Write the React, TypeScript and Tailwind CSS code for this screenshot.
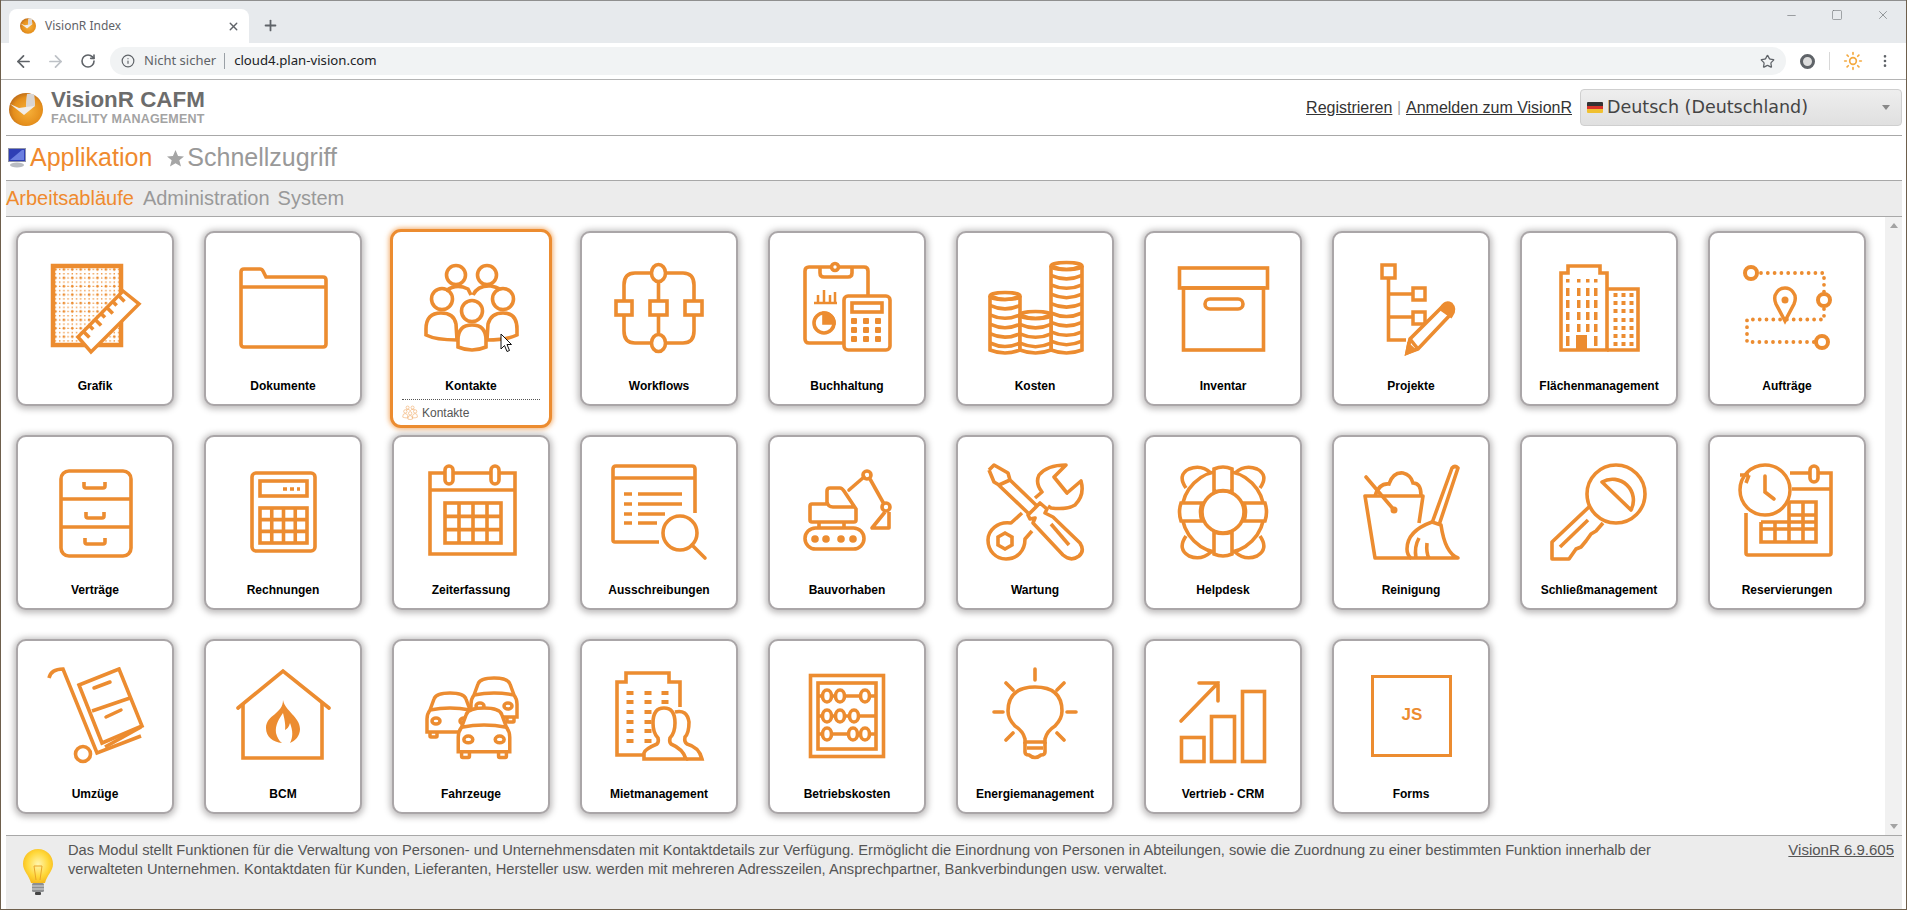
import React from "react";
import { ArrowLeft, ArrowRight, RotateCw, Info, Star, EllipsisVertical, Plus, X, Minus, Square, Sun } from "lucide-react";

const OG = "#ec8c30";

const CellGrid = ({ x, y, w, h, cols, rows }: { x: number; y: number; w: number; h: number; cols: number; rows: number }) => (
  <g>
    <rect x={x} y={y} width={w} height={h} />
    {Array.from({ length: cols - 1 }).map((_, i) => (
      <line key={i} x1={x + ((i + 1) * w) / cols} x2={x + ((i + 1) * w) / cols} y1={y} y2={y + h} />
    ))}
    {Array.from({ length: rows - 1 }).map((_, i) => (
      <line key={i} y1={y + ((i + 1) * h) / rows} y2={y + ((i + 1) * h) / rows} x1={x} x2={x + w} />
    ))}
  </g>
);

const CoinStack = ({ x, w, top, bottom }: { x: number; w: number; top: number; bottom: number }) => {
  const cx = x + w / 2;
  const rx = w / 2;
  const arcs: number[] = [];
  for (let y = top + 3; y < bottom - 4; y += 9.4) arcs.push(y);
  return (
    <g>
      <path d={`M${x} ${top + 3} V${bottom - 3} Q${cx} ${bottom + 3} ${x + w} ${bottom - 3} V${top + 3}`} fill="#fff" />
      <ellipse cx={cx} cy={top + 3} rx={rx} ry={3.5} />
      {arcs.map((y) => (
        <path key={y} d={`M${x} ${y} Q${cx} ${y + 7} ${x + w} ${y}`} />
      ))}
    </g>
  );
};

const Car = ({ x, y, s }: { x: number; y: number; s: number }) => (
  <g transform={`translate(${x} ${y}) scale(${s})`} strokeWidth={3.5 / s}>
    <rect x="5" y="39" width="7" height="6" rx="1" fill="#fff" />
    <rect x="38" y="39" width="7" height="6" rx="1" fill="#fff" />
    <path d="M2 40 V27 Q2 22 5 18 L9 7 Q11 1 25 1 Q39 1 41 7 L45 18 Q48 22 48 27 V40 Z" fill="#fff" />
    <path d="M5 18 Q25 14 45 18" />
    <ellipse cx="11" cy="29" rx="4" ry="3" />
    <ellipse cx="39" cy="29" rx="4" ry="3" />
  </g>
);

const icons: Record<string, React.ReactNode> = {
  Grafik: (
    <>
      <defs>
        <pattern id="grafik-dots" width="8.4" height="8.4" patternUnits="userSpaceOnUse">
          <circle cx="2.1" cy="2.1" r="1.3" fill={OG} stroke="none" />
          <circle cx="6.3" cy="2.1" r="0.8" fill={OG} stroke="none" />
          <circle cx="2.1" cy="6.3" r="0.8" fill={OG} stroke="none" />
          <circle cx="6.3" cy="6.3" r="0.8" fill={OG} stroke="none" />
        </pattern>
      </defs>
      <rect x="8" y="7" width="68" height="79" strokeWidth="4.5" fill="url(#grafik-dots)" />
      <polygon points="33,78 78,32 94,45 46,93" fill="#fff" strokeWidth="3.5" />
      {[0.12, 0.25, 0.38, 0.51, 0.64, 0.77, 0.9].map((t, i) => (
        <line key={t} x1={33 + t * 45} y1={78 - t * 46} x2={33 + t * 45 + (i % 2 ? 4 : 6)} y2={78 - t * 46 + (i % 2 ? 4 : 6)} />
      ))}
    </>
  ),
  Dokumente: (
    <>
      <path d="M8 13 Q8 10 11 10 H27 Q29 10 30 12 L33 18 H90 Q93 18 93 21 V85 Q93 88 90 88 H11 Q8 88 8 85 Z" />
      <path d="M8 28 H93" />
    </>
  ),
  Kontakte: (
    <>
      <circle cx="35" cy="16" r="9.5" />
      <circle cx="66" cy="16" r="9.5" />
      <path d="M25 32 Q35 24 47 30 L50 36" />
      <path d="M52 36 Q57 26 70 27 Q75 28 79 30" />
      <circle cx="21" cy="40" r="10.5" />
      <circle cx="82" cy="40" r="10.5" />
      <circle cx="51" cy="52" r="10.5" />
      <path d="M5 76 V70 Q5 54 20 54 Q33 54 35 65 L36 81 Q15 81 5 76 Z" />
      <path d="M96 76 V70 Q96 54 82 54 Q70 54 67 65 L66 81 Q86 81 96 76 Z" />
      <path d="M37 88 V81 Q37 66 51 66 Q65 66 65 81 V88 Q51 94 37 88 Z" />
    </>
  ),
  Workflows: (
    <>
      <path d="M42 14 H26 Q15 14 15 26 V42 M15 56 V72 Q15 84 26 84 H42 M57 84 H74 Q85 84 85 72 V56 M85 42 V26 Q85 14 74 14 H57" />
      <path d="M49.5 24 V41 M49.5 57 V74" />
      <ellipse cx="49.5" cy="14" rx="7" ry="8.5" />
      <ellipse cx="49.5" cy="84" rx="7" ry="8.5" />
      <rect x="7" y="42" width="16" height="14" />
      <rect x="41" y="42" width="17" height="14" />
      <rect x="76" y="42" width="17" height="14" />
    </>
  ),
  Buchhaltung: (
    <>
      <path d="M46 84 H12 Q8 84 8 80 V12 Q8 8 12 8 H67 Q71 8 71 12 V36" />
      <path d="M23 8 V14 Q23 18 27 18 H51 Q55 18 55 14 V8" />
      <circle cx="38" cy="8" r="3.5" fill="#fff" />
      <path d="M17 44 H40 M21 44 V36 M27 44 V31 M33 44 V36 M38 44 V33" strokeWidth="2.5" />
      <circle cx="27" cy="64" r="10" />
      <path d="M27 54 V64 H37 A10 10 0 0 0 27 54 Z" fill={OG} />
      <rect x="47" y="37" width="46" height="54" rx="4" />
      <rect x="55" y="44" width="30" height="9" />
      {[62, 71, 80].map((y) => [57, 69, 81].map((x) => <rect key={`${x}-${y}`} x={x - 3} y={y - 3} width="6" height="6" fill={OG} stroke="none" rx="1" />))}
    </>
  ),
  Kosten: (
    <>
      <CoinStack x={66} w={31} top={4} bottom={94} />
      <CoinStack x={5} w={30} top={34} bottom={94} />
      <CoinStack x={35} w={31} top={53} bottom={94} />
    </>
  ),
  Inventar: (
    <>
      <rect x="6.5" y="9" width="88" height="20" />
      <rect x="10.5" y="29" width="80" height="62" />
      <rect x="32" y="40" width="38" height="10" rx="5" />
    </>
  ),
  Projekte: (
    <>
      <rect x="21" y="6" width="13" height="13" strokeWidth="3.5" />
      <path d="M27.5 19 V81 H45 M27.5 35 H51 M27.5 58 H51" />
      <rect x="52" y="29" width="12" height="12" strokeWidth="3.5" />
      <rect x="52" y="53" width="12" height="12" strokeWidth="3.5" />
      <path d="M46 94 L49 80 L82 47 Q86 43 90 47 Q94 51 90 55 L57 90 Z" fill="#fff" />
      <path d="M80 50 Q84 42 90 45 Q95 50 90 57 Z" fill={OG} />
      <path d="M46 94 L47.5 86 L53 91 Z" fill={OG} />
      <path d="M49 80 L57 90" />
    </>
  ),
  Flächenmanagement: (
    <>
      <path d="M12 91 V14 H19 V7 H51 V14 H58 V91 Z" />
      <path d="M59 30 H89 V91 H58" />
      {[18, 29, 38, 46].map((x) => (
        <g key={x} fill={OG} stroke="none">
          <rect x={x - 1} y="20" width="3.5" height="3.5" />
          {[29, 41, 53, 65].map((y) => (
            <rect key={y} x={x - 1} y={y} width="3.5" height="8" />
          ))}
          {x !== 29 && x !== 38 && <rect x={x - 1} y="77" width="3.5" height="10" />}
        </g>
      ))}
      <rect x="27" y="76" width="11" height="15" fill={OG} stroke="none" />
      {[36, 44, 52, 61, 69, 77, 85].map((y) =>
        [66, 74, 82].map((x) => <rect key={`${x}-${y}`} x={x - 1.5} y={y - 2} width="4" height="4" fill={OG} stroke="none" />)
      )}
    </>
  ),
  Aufträge: (
    <>
      <circle cx="14" cy="14" r="6" strokeWidth="4" />
      <circle cx="87" cy="41" r="6" strokeWidth="4" />
      <circle cx="85" cy="83" r="6" strokeWidth="4" />
      <path d="M24 14 H87 V33 M87 50 V60.5 H10 V83 H77" strokeWidth="3.8" strokeDasharray="0 6.8" strokeLinecap="round" />
      <path d="M48 62 L39 45 Q36 38 40 33 Q43 29 48 29 Q53 29 56 33 Q60 38 57 45 Z" fill="#fff" strokeWidth="3.5" />
      <circle cx="48" cy="41" r="3.5" fill={OG} stroke="none" />
    </>
  ),
  Verträge: (
    <>
      <rect x="16" y="8" width="70" height="85" rx="8" />
      <path d="M16 36 H86 M16 64 H86" />
      <path d="M39 19 V23 Q39 25 41 25 H58 Q60 25 60 23 V19" />
      <path d="M41 49 V53 Q41 55 43 55 H57 Q59 55 59 53 V49" />
      <path d="M40 75 V79 Q40 81 42 81 H58 Q60 81 60 79 V75" />
    </>
  ),
  Rechnungen: (
    <>
      <rect x="19" y="10" width="63" height="78" rx="4" />
      <rect x="27" y="18" width="47" height="15" />
      <path d="M50 26 H67" strokeDasharray="4 3" strokeWidth="3.5" />
      <CellGrid x={27} y={45} w={47} h={35} cols={4} rows={3} />
    </>
  ),
  Zeiterfassung: (
    <>
      <path d="M23 10 H9 V91 H94 V10 H79 M33 10 H69" />
      <path d="M9 27 H94" />
      <rect x="24" y="3" width="8" height="18" rx="4" fill="#fff" />
      <rect x="70" y="3" width="8" height="18" rx="4" fill="#fff" />
      <CellGrid x={24} y={40} w={56} h={40} cols={4} rows={3} />
    </>
  ),
  Ausschreibungen: (
    <>
      <path d="M50 79 H6 Q4 79 4 77 V6 Q4 3 7 3 H83 Q86 3 86 6 V50" />
      <path d="M4 15 H86" />
      <path d="M15 31 H23 M15 41 H23 M15 51 H23 M15 60 H23" />
      <path d="M29 31 H73 M29 41 H73 M29 51 H56 M29 60 H48" />
      <circle cx="71" cy="70" r="17" />
      <path d="M83 82 L96 95" strokeLinecap="round" />
    </>
  ),
  Bauvorhaben: (
    <>
      <rect x="8" y="65" width="59" height="21" rx="10.5" />
      {[18, 29, 44, 56].map((x) => (
        <circle key={x} cx={x} cy="76" r="3.8" fill={OG} stroke="none" />
      ))}
      <path d="M22 65 V59 M47 65 V59" />
      <path d="M30 41 H15 Q13 41 13 43 V57 Q13 59 15 59 H57 Q59 59 59 57 V46 L47 28 Q45 25 43 25 H33 Q30 25 30 28 V39 Q31 44 36 44 H58" />
      <path d="M52 27 L67 14" strokeLinecap="round" />
      <circle cx="70" cy="12" r="4" />
      <path d="M73 16 L87 41" />
      <circle cx="89" cy="44" r="4" />
      <path d="M88 49 L75 65 H92 V49" strokeLinejoin="round" />
    </>
  ),
  Wartung: (
    <>
      <path d="M4 7 L9 2 L23 10 L25 17 L52 43 M13.6 22 L43 50 M4 7 L9 19 L14 22 L25 17" strokeLinejoin="round" />
      <path d="M43 52 L55 40 L62 46 L60 50 L68 54 L95 80 Q100 88 94 93 Q86 99 78 92 L48 60 L50 55 L45 56 Z" strokeLinejoin="round" />
      <path d="M66 61 L84 82" />
      <path d="M50 35 L57 29 Q50 20 54 12 Q62 2 81 2 L69 14 L82 30 L96 18 Q100 32 90 42 Q82 47 66 45 L63 43" strokeLinejoin="round" />
      <path d="M37 50 L26 60 C12 58 3 68 3 77 C3 88 11 96 21 96 C32 96 40 88 40 76 L47 68" strokeLinejoin="round" />
      <polygon points="20,70 27,74 27,82 20,86 13,82 13,74" />
    </>
  ),
  Helpdesk: (
    <>
      <path d="M13 25 Q4 12 16 6 Q28 1 38 10 M87 25 Q96 12 84 6 Q72 1 62 10 M13 73 Q4 86 16 93 Q28 98 38 89 M87 73 Q96 86 84 93 Q72 98 62 89" />
      <circle cx="50" cy="49" r="41" fill="#fff" />
      <circle cx="50" cy="49" r="21" />
      <path d="M41 8 V29 Q50 26 59 29 V6 Q50 2 41 6 Z" fill="#fff" />
      <path d="M41 90 V69 Q50 72 59 69 V91 Q50 95 41 91 Z" fill="#fff" />
      <path d="M8 40 H29 Q26 49 29 58 H8 Q5 49 8 40 Z" fill="#fff" />
      <path d="M92 40 H71 Q74 49 71 58 H92 Q95 49 92 40 Z" fill="#fff" />
    </>
  ),
  Reinigung: (
    <>
      <path d="M14 33 Q18 20 28 21 Q32 9 42 10 Q50 12 52 20 Q60 20 60 32" />
      <path d="M50 95 H14 L4 33 H62 L58 60" strokeLinejoin="round" />
      <path d="M5 14 L33 47" strokeLinecap="round" />
      <circle cx="33" cy="47" r="3.5" fill={OG} stroke="none" />
      <path d="M71 60 L91 5 Q94 2 97 5 L78 62" strokeLinejoin="round" />
      <path d="M71 59 Q46 68 46 86 Q46 92 50 95 H97 Q84 90 80 62 Z" fill="#fff" strokeLinejoin="round" />
      <path d="M58 75 Q53 84 55 95 M66 80 Q65 90 68 95" />
    </>
  ),
  Schließmanagement: (
    <>
      <circle cx="67" cy="31" r="29" />
      <path d="M53 19 L82 47 A21 21 0 0 0 53 19 Z" strokeLinejoin="round" />
      <path d="M41 43 L3 79 V96 H20 L27 86 L32 84 L37 78 L42 71 L47 68 L54 60" strokeLinejoin="round" />
      <path d="M39 57 L11 84" />
    </>
  ),
  Reservierungen: (
    <>
      <circle cx="28" cy="27" r="25" strokeWidth="3.5" fill="#fff" />
      <path d="M3 12 H12 M12 12 L9 20" strokeLinejoin="round" fill="none" />
      <path d="M28 13 V29 L37 36" strokeLinecap="round" />
      <path d="M53 10 H73 M81 10 H94 V90 Q94 92 92 92 H11 Q9 92 9 90 V50 M55 26 H94" />
      <rect x="73" y="3" width="8" height="16" rx="4" fill="#fff" />
      <path d="M52 39 H79 V79 H24 V59 M24 66 H79 M24 59 H79 M38 59 V79 M52 39 V79 M66 39 V79 M52 52 H79" />
    </>
  ),
  Umzüge: (
    <>
      <path d="M4 11 Q6 2 18 2 L52 86 L96 69" />
      <path d="M60 80 L96 60" />
      <circle cx="38" cy="87" r="7.5" />
      <polygon points="34,18 74,2 97,59 57,76" />
      <path d="M47 44 L85 31" />
      <path d="M49 21 L65 15 M61 50 L76 43" strokeWidth="3.5" strokeLinecap="round" />
    </>
  ),
  BCM: (
    <>
      <path d="M5 41 L50 4 L96 41" strokeLinecap="round" />
      <path d="M10 36 V91 H89 V36" />
      <path
        d="M50 33 C52 44 67 50 67 62 C67 69 62 74 57 76 C60 70 60 64 57 56 C56 60 54 62 52 63 C53 58 51 50 50 46 C46 52 42 58 43 66 C44 70 46 74 49 76 C40 75 33 70 33 61 C33 48 50 47 50 33 Z"
        fill={OG}
        stroke="none"
      />
    </>
  ),
  Fahrzeuge: (
    <>
      <Car x={48} y={10} s={1} />
      <Car x={4} y={25} s={1} />
      <Car x={35} y={40} s={1.12} />
    </>
  ),
  Mietmanagement: (
    <>
      <path d="M36 88 H8 V15 H17 V6 H60 V15 H71 V40" />
      {[26, 35, 45, 55, 64, 74].map((y) => [21, 39, 56].map((x) => <rect key={`${x}-${y}`} x={x - 3.5} y={y - 2} width="7" height="4" fill={OG} stroke="none" />))}
      <path d="M66 44 Q78 42 80 55 Q80 66 76 70 Q75 75 78 77 Q90 80 93 92 H50 V44 Z" fill="#fff" stroke="none" />
      <path d="M66 45 Q78 42 80 55 Q80 66 76 70 Q75 75 78 77 Q90 80 93 92 H77" />
      <path d="M35 92 V86 Q36 82 48 77 Q50 75 49 71 Q44 66 44 56 Q44 41 55 41 Q66 41 66 56 Q66 66 61 71 Q60 75 62 77 Q74 82 77 92 Z" fill="#fff" />
    </>
  ),
  Betriebskosten: (
    <>
      <rect x="13.5" y="8.5" width="73" height="81" />
      <rect x="21" y="16" width="58" height="66" />
      <path d="M21 29 H79 M21 49 H79 M21 67 H79" />
      {[
        [30, 43, 68, 29],
        [30, 43, 57, 49],
        [30, 56, 68, 67],
      ].map(([a, b, c, y]) =>
        [a, b, c].map((x) => <ellipse key={`${x}-${y}`} cx={x} cy={y} rx="4.5" ry="6" fill="#fff" />)
      )}
    </>
  ),
  Energiemanagement: (
    <>
      <path d="M50 2 V13 M21 16 L28 23 M79 16 L72 23 M9 45 H18 M82 45 H91 M21 73 L28 66 M79 73 L72 66" strokeLinecap="round" />
      <path d="M40 75 V72 Q38 64 30 59 Q23 52 23 44 Q23 20 50 20 Q77 20 77 44 Q77 52 70 59 Q62 64 60 72 V75 Z" />
      <path d="M40 75 V85 Q40 88 44 88 Q50 93 56 88 Q60 88 60 85 V75 M42 81 H58" />
    </>
  ),
  "Vertrieb - CRM": (
    <>
      <rect x="8.5" y="70.5" width="22.5" height="24" />
      <rect x="38.5" y="49.5" width="23" height="45" />
      <rect x="69.5" y="24.5" width="22" height="70" />
      <path d="M8 54 L45 16 M26 16 H45 V34" strokeLinecap="round" />
    </>
  ),
  Forms: (
    <>
      <rect x="11.5" y="9.5" width="78" height="79" strokeWidth="3" />
      <text x="51" y="53" textAnchor="middle" fill={OG} stroke="none" fontSize="17" fontWeight="700" fontFamily="'Liberation Sans', sans-serif">
        JS
      </text>
    </>
  ),
};

const rows = [
  "Grafik", "Dokumente", "Kontakte", "Workflows", "Buchhaltung", "Kosten", "Inventar", "Projekte", "Flächenmanagement", "Aufträge",
  "Verträge", "Rechnungen", "Zeiterfassung", "Ausschreibungen", "Bauvorhaben", "Wartung", "Helpdesk", "Reinigung", "Schließmanagement", "Reservierungen",
  "Umzüge", "BCM", "Fahrzeuge", "Mietmanagement", "Betriebskosten", "Energiemanagement", "Vertrieb - CRM", "Forms",
];

const ModuleIcon = ({ name, className }: { name: string; className: string }) => (
  <svg viewBox="0 0 100 100" className={className} fill="none" stroke={OG} strokeWidth="3.6">
    {icons[name]}
  </svg>
);

const Card = ({ name }: { name: string }) => {
  const active = name === "Kontakte";
  return (
    <div className="relative h-[175px] w-[158px]">
      {active ? (
        <div className="absolute left-[-2px] top-[-2px] h-[199px] w-[162px] rounded-[11px] border-[3px] border-[#ec8c30] bg-white shadow-[0_0_5px_1px_rgba(236,140,48,0.7)]" />
      ) : (
        <div className="absolute inset-0 rounded-[10px] border-2 border-[#aaa6a8] bg-white shadow-[0_1px_6px_2px_rgba(90,85,85,0.4)]" />
      )}
      <div className="relative flex h-full flex-col items-center pt-[28px]">
        <ModuleIcon name={name} className="h-[100px] w-[100px] shrink-0" />
        <div className="mt-[20px] text-[12px] font-bold leading-[14px] text-black">{name}</div>
      </div>
      {active && (
        <>
          <div className="absolute left-[10px] top-[168px] w-[138px] border-t border-dotted border-[#555]" />
          <div className="absolute left-[10px] top-[174px] flex items-center gap-[4px] text-[12px] leading-[16px] text-[#555]">
            <ModuleIcon name="Kontakte" className="h-[16px] w-[16px] opacity-75" />
            Kontakte
          </div>
          <svg viewBox="0 0 12 20" className="absolute left-[108px] top-[102px] h-[20px] w-[12px]">
            <path d="M1 1 V16 L4.5 12.5 L7 18.5 L9.5 17.5 L7 11.5 H11.5 Z" fill="#fff" stroke="#111" strokeWidth="1" />
          </svg>
        </>
      )}
    </div>
  );
};

const Logo = ({ className, id }: { className: string; id: string }) => (
  <svg viewBox="0 0 34 33" className={className}>
    <defs>
      <radialGradient id={id} cx="0.55" cy="0.55" r="0.6">
        <stop offset="0" stopColor="#f7b13a" />
        <stop offset="0.7" stopColor="#e58f1c" />
        <stop offset="1" stopColor="#b8681a" />
      </radialGradient>
    </defs>
    <ellipse cx="17" cy="16.5" rx="17" ry="16.5" fill={`url(#${id})`} />
    <path d="M1 11 L10 15 L17 14 L18 1 L25 1 L26 13 L15 22 Z" fill="#f2eeea" />
    <path d="M18 1 L25 1 L26 13 L17 14 Z" fill="#d9d5d2" />
  </svg>
);

export default function App() {
  return (
    <div className="flex h-[910px] w-[1907px] flex-col overflow-hidden border-x border-b border-[#6e5f4c] bg-white [font-family:'Liberation_Sans',Arial,sans-serif]">
      {/* browser tabs */}
      <div className="flex h-[43px] shrink-0 items-end border-t border-[#8f8f8f] bg-[#e7eaed] pl-[8px]">
        <div className="flex h-[34px] w-[240px] items-center rounded-t-[8px] bg-white pl-[11px] pr-[9px]">
          <Logo id="fav" className="h-[16px] w-[16px]" />
          <span className="ml-[9px] text-[12px] text-[#5f6368] [font-family:'Noto_Sans',sans-serif]">VisionR Index</span>
          <X className="ml-auto text-[#5f6368]" size={13} strokeWidth={2.5} />
        </div>
        <Plus className="mb-[9px] ml-[13px] text-[#5f6368]" size={17} strokeWidth={2.5} />
        <div className="mb-[21px] ml-auto flex items-center gap-[33px] pr-[16px] text-[#6f7276]">
          <Minus size={13} strokeWidth={1.2} />
          <Square size={12} strokeWidth={1.2} />
          <X size={14} strokeWidth={1.2} />
        </div>
      </div>
      {/* browser toolbar */}
      <div className="flex h-[37px] shrink-0 items-center border-b border-[#b4b4b4] bg-white pl-[13px] [font-family:'Noto_Sans',sans-serif]">
        <ArrowLeft size={19} className="text-[#5f6368]" strokeWidth={2.2} />
        <ArrowRight size={19} className="ml-[13px] text-[#bdc1c6]" strokeWidth={2.2} />
        <RotateCw size={16} className="ml-[15px] text-[#5f6368]" strokeWidth={2.4} />
        <div className="ml-[14px] flex h-[28px] w-[1676px] items-center rounded-full bg-[#f1f3f4] pl-[11px]">
          <Info size={14} className="text-[#5f6368]" />
          <span className="ml-[9px] text-[13px] text-[#5f6368]">Nicht sicher</span>
          <span className="ml-[8px] h-[16px] border-l border-[#9aa0a6]" />
          <span className="ml-[9px] text-[13.2px] text-[#202124]">cloud4.plan-vision.com</span>
          <Star size={15} className="ml-auto mr-[11px] text-[#5f6368]" />
        </div>
        <div className="ml-[14px] h-[15px] w-[15px] rounded-full border-[3px] border-[#5f6368] bg-[#ddd]" />
        <span className="ml-[14px] h-[18px] border-l border-[#d8d8d8]" />
        <Sun size={20} className="ml-[13px] text-[#f4a93f]" />
        <EllipsisVertical size={16} className="ml-[14px] text-[#5f6368]" />
      </div>

      <div className="flex min-h-0 flex-1 flex-col pl-[5px] pr-[4px]">
        {/* header */}
        <div className="flex h-[56px] shrink-0 items-center justify-between border-b border-[#a8a8a8] pl-[3px]">
          <div className="flex items-center">
            <Logo id="logo" className="mt-[3px] h-[33px] w-[34px]" />
            <div className="ml-[8px] flex flex-col">
              <span className="text-[22.4px] font-bold leading-[22px] text-[#6c6c6c]">VisionR CAFM</span>
              <span className="mt-[1px] text-[12.5px] font-bold leading-[14px] tracking-[0.2px] text-[#a3a3a3]">FACILITY MANAGEMENT</span>
            </div>
          </div>
          <div className="flex items-center">
            <a className="text-[16px] text-[#333] underline">Registrieren</a>
            <span className="mx-[5px] text-[14px] text-[#999]">|</span>
            <a className="text-[16px] text-[#333] underline">Anmelden zum VisionR</a>
            <div className="ml-[8px] flex h-[37px] w-[322px] items-center rounded-[4px] border border-[#cfcfcf] bg-gradient-to-b from-[#eeeeee] to-[#e0e0e0] pl-[6px] pr-[11px]">
              <span className="flex h-[11px] w-[16px] flex-col overflow-hidden rounded-[1px]">
                <span className="flex-1 bg-[#333]" />
                <span className="flex-1 bg-[#d8342a]" />
                <span className="flex-1 bg-[#f0c030]" />
              </span>
              <span className="ml-[4px] text-[17.5px] text-[#444] [font-family:'DejaVu_Sans',sans-serif]">Deutsch (Deutschland)</span>
              <span className="ml-auto h-0 w-0 border-x-[4px] border-t-[5px] border-x-transparent border-t-[#888]" />
            </div>
          </div>
        </div>
        {/* main tabs */}
        <div className="flex h-[45px] shrink-0 items-center border-b border-[#a8a8a8] pl-[2px] text-[25px]">
          <svg viewBox="0 0 18 20" className="h-[20px] w-[18px]">
            <rect x="0.5" y="0.5" width="17" height="13" fill="#2f3fb5" stroke="#8f93a8" />
            <path d="M2 12 L14 2 H16 V12 Z" fill="#6b7fe0" />
            <ellipse cx="9" cy="17" rx="7" ry="2.5" fill="#b9bcc2" />
          </svg>
          <span className="ml-[4px] text-[#ef8a2e]">Applikation</span>
          <svg viewBox="0 0 20 20" className="ml-[15px] h-[17px] w-[17px]">
            <path d="M10 0 L13 7 L20 7.5 L14.5 12 L16.5 19.5 L10 15.5 L3.5 19.5 L5.5 12 L0 7.5 L7 7 Z" fill="#a5a5a5" />
          </svg>
          <span className="ml-[3px] text-[#999]">Schnellzugriff</span>
        </div>
        {/* sub navigation */}
        <div className="flex h-[36px] shrink-0 items-center gap-[8px] border-b border-[#a8a8a8] bg-[#ececec] pb-[2px] text-[20px] text-[#999]">
          <span className="text-[#ef8a2e]">Arbeitsabläufe</span>
          <span className="ml-[1px]">Administration</span>
          <span>System</span>
        </div>
        {/* module grid */}
        <div className="flex min-h-0 flex-1">
          <div className="flex-1 pl-[10px] pt-[14px]">
            <div className="grid grid-cols-[repeat(10,158px)] gap-x-[30px] gap-y-[29px]">
              {rows.map((r) => (
                <Card key={r} name={r} />
              ))}
            </div>
          </div>
          <div className="flex w-[17px] flex-col items-center justify-between bg-[#f1f1f1] py-[6px]">
            <span className="h-0 w-0 border-x-[4px] border-b-[5px] border-x-transparent border-b-[#a3a3a3]" />
            <span className="h-0 w-0 border-x-[4px] border-t-[5px] border-x-transparent border-t-[#a3a3a3]" />
          </div>
        </div>
        {/* description footer */}
        <div className="flex h-[74px] shrink-0 border-t border-[#a8a8a8] bg-[#ececec]">
          <svg viewBox="0 0 32 48" className="ml-[16px] mt-[12px] h-[48px] w-[32px] shrink-0">
            <defs>
              <radialGradient id="bulb" cx="0.5" cy="0.45" r="0.6">
                <stop offset="0" stopColor="#fff6b0" />
                <stop offset="0.6" stopColor="#ffd83a" />
                <stop offset="1" stopColor="#f5b417" />
              </radialGradient>
            </defs>
            <path d="M16 1 C25 1 31 8 31 16 C31 23 25 27 23 35 H9 C7 27 1 23 1 16 C1 8 7 1 16 1 Z" fill="url(#bulb)" />
            <path d="M12 18 L14 32 M20 18 L18 32 M12 18 H20" stroke="#e9a52a" strokeWidth="1" fill="none" />
            <rect x="10" y="35" width="12" height="9" rx="1.5" fill="#8d8f91" />
            <path d="M10 38 H22 M10 41 H22" stroke="#d8d8d8" strokeWidth="1" />
            <rect x="13" y="44" width="6" height="3" rx="1" fill="#444" />
          </svg>
          <p className="ml-[14px] mt-[5px] w-[1610px] text-[14.67px] leading-[18.5px] text-[#555]">
            Das Modul stellt Funktionen für die Verwaltung von Personen- und Unternehmensdaten mit Kontaktdetails zur Verfügung. Ermöglicht die Einordnung von Personen in Abteilungen, sowie die Zuordnung zu einer bestimmten Funktion innerhalb der verwalteten Unternehmen. Kontaktdaten für Kunden, Lieferanten, Hersteller usw. werden mit mehreren Adresszeilen, Ansprechpartner, Bankverbindungen usw. verwaltet.
          </p>
          <a className="ml-auto mr-[8px] mt-[5px] text-[15px] leading-[18.5px] text-[#555] underline">VisionR 6.9.605</a>
        </div>
      </div>
    </div>
  );
}
